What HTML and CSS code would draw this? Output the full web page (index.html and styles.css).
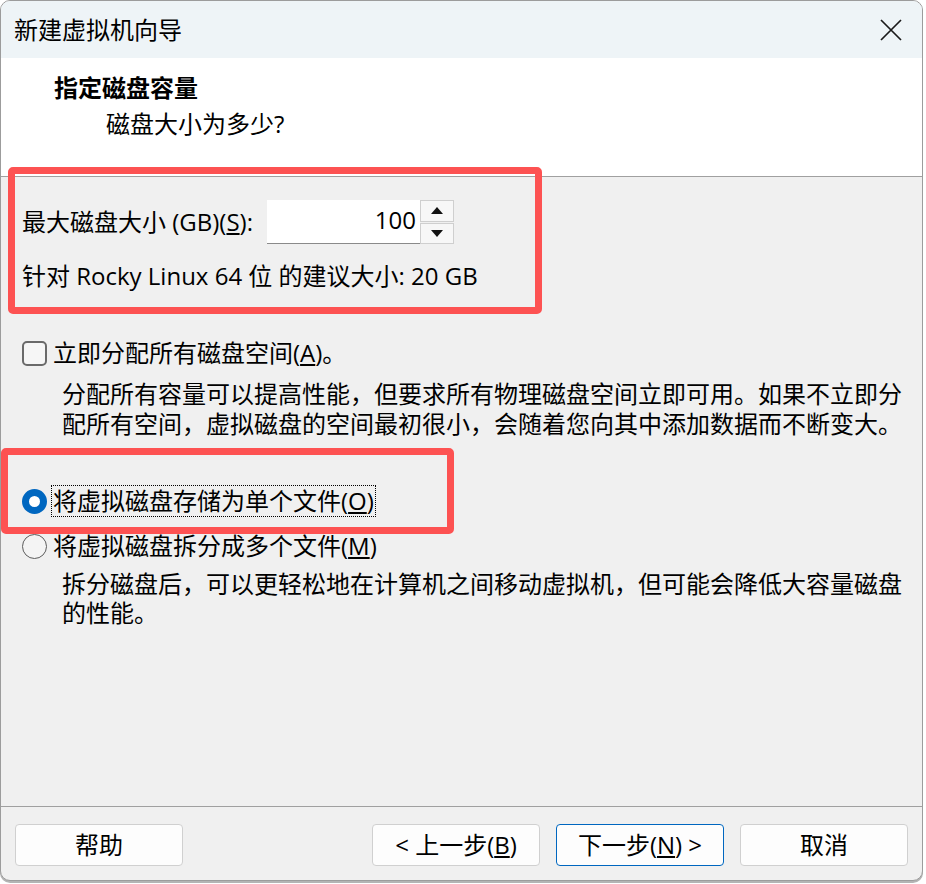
FILE: index.html
```html
<!DOCTYPE html>
<html lang="zh-CN">
<head>
    <meta charset="UTF-8">
    <meta name="viewport" content="width=device-width, initial-scale=1.0">
    <title>新建虚拟机向导</title>
    <link rel="stylesheet" href="styles.css">
</head>
<body>
    <div class="tela">
        <div class="janela">
            <div class="barra-titulo">
                <span class="titulo">新建虚拟机向导</span>
                <span class="fechar">
                    <svg width="24" height="24" viewBox="0 0 24 24">
                        <path d="M2 2 L22 22 M22 2 L2 22" stroke="#1a1a1a" stroke-width="1.7" fill="none"/>
                    </svg>
                </span>
            </div>

            <div class="cabecalho">
                <h1>指定磁盘容量</h1>
                <p>磁盘大小为多少?</p>
            </div>

            <div class="conteudo">
                <div class="linha-tamanho">
                    <span>最大磁盘大小 (GB)(<u>S</u>):</span>
                    <div class="spin">
                        <div class="campo">100</div>
                        <div class="setas">
                            <span><i class="seta-cima"></i></span>
                            <span><i class="seta-baixo"></i></span>
                        </div>
                    </div>
                </div>
                <div class="sugestao">针对 Rocky Linux 64 位 的建议大小: 20 GB</div>

                <div class="opcao primeira">
                    <span class="caixa"></span>
                    <span class="rotulo">立即分配所有磁盘空间(<u>A</u>)。</span>
                </div>
                <div class="descricao">分配所有容量可以提高性能，但要求所有物理磁盘空间立即可用。如果不立即分配所有空间，虚拟磁盘的空间最初很小，会随着您向其中添加数据而不断变大。</div>

                <div class="opcao primeira">
                    <span class="radio marcado"></span>
                    <span class="rotulo foco">将虚拟磁盘存储为单个文件(<u>O</u>)</span>
                </div>
                <div class="opcao segunda">
                    <span class="radio"></span>
                    <span class="rotulo">将虚拟磁盘拆分成多个文件(<u>M</u>)</span>
                </div>
                <div class="descricao curta">拆分磁盘后，可以更轻松地在计算机之间移动虚拟机，但可能会降低大容量磁盘的性能。</div>
            </div>

            <div class="rodape">
                <button class="botao">帮助</button>
                <button class="botao voltar">&lt; 上一步(<u>B</u>)</button>
                <button class="botao padrao">下一步(<u>N</u>) &gt;</button>
                <button class="botao">取消</button>
            </div>
        </div>

        <!-- marcações em vermelho do print -->
        <div class="marca marca-tamanho"></div>
        <div class="marca marca-arquivo"></div>
    </div>
</body>
</html>
```

FILE: styles.css
```css
:root {
    --fundo: #f0f0f0;
    --titulo-fundo: #eef4f7;
    --linha: #a0a0a0;
    --azul: #0067c0;
    --vermelho: #fd5252;
    --texto: #000;
}

body {
    margin: 0;
    background: #fff;
    font-family: "Open Sans", "Noto Sans CJK SC", sans-serif;
    font-size: 24px;
    color: var(--texto);
}

.tela {
    position: relative;
    width: 926px;
    height: 884px;
}

.janela {
    width: 923px;
    height: 881px;
    box-sizing: border-box;
    border: 1px solid #9c9c9c;
    border-radius: 10px;
    background: var(--fundo);
    display: flex;
    flex-direction: column;
    box-shadow: 0 2px 0 #b4b4b4;
}

.barra-titulo {
    height: 57px;
    flex: none;
    background: var(--titulo-fundo);
    border-radius: 9px 9px 0 0;
    display: flex;
    align-items: center;
    justify-content: space-between;
    padding: 0 19px 0 13px;
}

.titulo {
    font-size: 24px;
    line-height: 30px;
}

.fechar {
    display: flex;
}

.cabecalho {
    height: 119px;
    flex: none;
    box-sizing: border-box;
    background: #fff;
    border-bottom: 1px solid var(--linha);
    padding: 13px 0 0 53px;
}

.cabecalho h1 {
    margin: 0;
    font-size: 24px;
    font-weight: bold;
    line-height: 34px;
}

.cabecalho p {
    margin: 0 0 0 52px;
    line-height: 37px;
}

.conteudo {
    flex: 1;
    padding: 23px 0 0 21px;
}

.linha-tamanho {
    display: flex;
    align-items: center;
    height: 44px;
    line-height: 30px;
}

.spin {
    display: flex;
    margin-left: 14px;
    height: 44px;
}

.spin .campo {
    width: 153px;
    box-sizing: border-box;
    background: #fff;
    border-bottom: 1px solid #8a8a8a;
    text-align: right;
    padding-right: 4px;
    line-height: 40px;
}

.setas {
    width: 34px;
    display: flex;
    flex-direction: column;
    gap: 1px;
}

.setas span {
    flex: 1;
    border: 1px solid #cfcfcf;
    background: #f7f7f7;
    display: flex;
    align-items: center;
    justify-content: center;
}

.seta-cima, .seta-baixo {
    width: 0;
    height: 0;
    border-left: 6px solid transparent;
    border-right: 6px solid transparent;
}

.seta-cima { border-bottom: 7px solid #111; }
.seta-baixo { border-top: 7px solid #111; }

.sugestao {
    margin-top: 17px;
    line-height: 30px;
}

.opcao {
    display: flex;
    align-items: center;
    line-height: 30px;
}

.opcao.primeira { margin-top: 46px; }
.opcao.segunda { margin-top: 13px; }

.caixa {
    width: 25px;
    height: 25px;
    box-sizing: border-box;
    border: 2px solid #6a6a6a;
    border-radius: 5px;
    background: #f6f6f6;
    margin-right: 4px;
}

.radio {
    width: 25px;
    height: 25px;
    box-sizing: border-box;
    border-radius: 50%;
    border: 1.5px solid #5c5c5c;
    background: #f4f4f4;
    margin-right: 4px;
}

.radio.marcado {
    border: 7.5px solid var(--azul);
    background: #fff;
}

.rotulo {
    padding: 0 1px;
    border: 1px dotted transparent;
}

.rotulo.foco {
    border-color: #000;
}

.descricao {
    margin: 10px 0 0 40px;
    width: 845px;
    line-height: 30px;
}

.descricao.curta {
    margin-top: 7px;
    line-height: 29px;
}

.rodape {
    flex: none;
    border-top: 1px solid var(--linha);
    padding: 17px 14px 14px;
    display: flex;
    gap: 16px;
}

.botao {
    width: 168px;
    height: 42px;
    box-sizing: border-box;
    background: #fdfdfd;
    border: 1px solid #d0d0d0;
    border-radius: 4px;
    font-family: inherit;
    font-size: 24px;
    color: var(--texto);
    padding: 0;
    line-height: 30px;
}

.botao.voltar { margin-left: auto; }

.botao.padrao {
    border: 1.5px solid var(--azul);
}

.marca {
    position: absolute;
    border: 7px solid var(--vermelho);
    border-radius: 5px;
    box-sizing: border-box;
}

.marca-tamanho {
    left: 8px;
    top: 167px;
    width: 534px;
    height: 147px;
}

.marca-arquivo {
    left: 1px;
    top: 448px;
    width: 453px;
    height: 86px;
}
```
